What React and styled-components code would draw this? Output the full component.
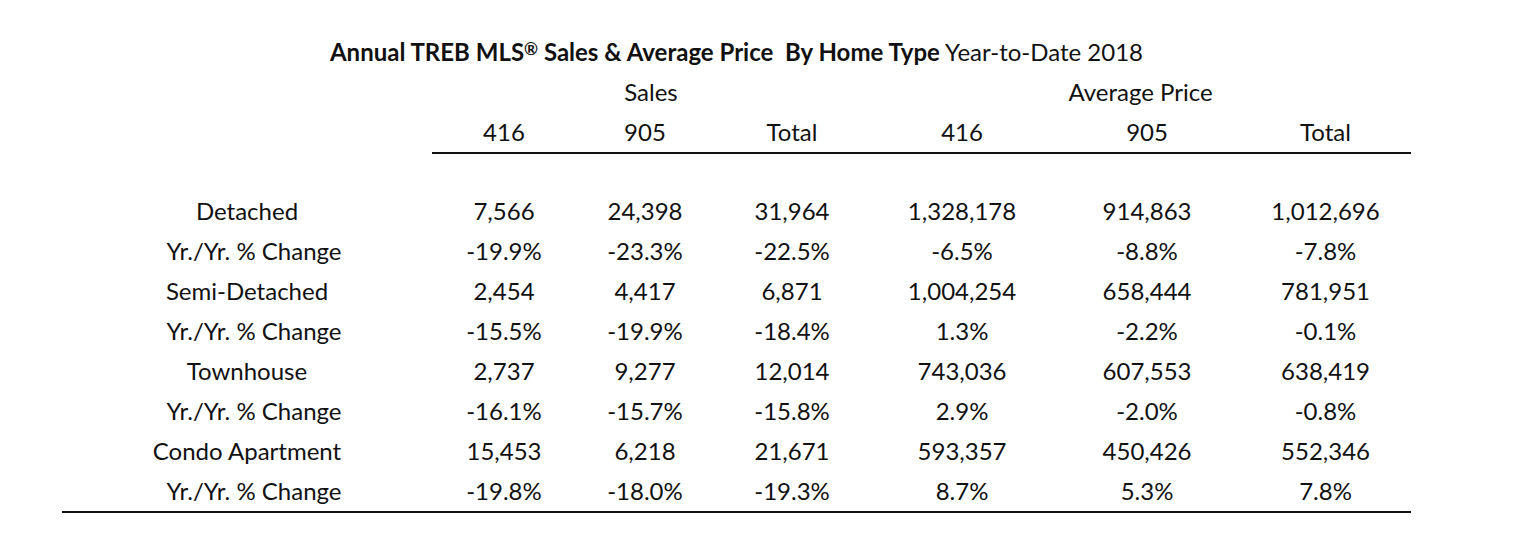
import styled, { createGlobalStyle } from 'styled-components';

const rows = [
  { label: 'Detached', values: ['7,566', '24,398', '31,964', '1,328,178', '914,863', '1,012,696'] },
  { label: 'Yr./Yr. % Change', change: true, values: ['-19.9%', '-23.3%', '-22.5%', '-6.5%', '-8.8%', '-7.8%'] },
  { label: 'Semi-Detached', values: ['2,454', '4,417', '6,871', '1,004,254', '658,444', '781,951'] },
  { label: 'Yr./Yr. % Change', change: true, values: ['-15.5%', '-19.9%', '-18.4%', '1.3%', '-2.2%', '-0.1%'] },
  { label: 'Townhouse', values: ['2,737', '9,277', '12,014', '743,036', '607,553', '638,419'] },
  { label: 'Yr./Yr. % Change', change: true, values: ['-16.1%', '-15.7%', '-15.8%', '2.9%', '-2.0%', '-0.8%'] },
  { label: 'Condo Apartment', values: ['15,453', '6,218', '21,671', '593,357', '450,426', '552,346'] },
  { label: 'Yr./Yr. % Change', change: true, values: ['-19.8%', '-18.0%', '-19.3%', '8.7%', '5.3%', '7.8%'] },
];

const columns = ['416', '905', 'Total', '416', '905', 'Total'];
const widths = [370, 144, 138, 156, 184, 186, 171];

export default function App() {
  return (
    <>
      <GlobalStyle />
      <Page>
        <Title>
          <strong>
            Annual TREB MLS<Reg>®</Reg> Sales &amp; Average Price&nbsp; By Home Type
          </strong>{' '}
          Year-to-Date 2018
        </Title>
        <Table>
          <colgroup>
            {widths.map((w, i) => (
              <col key={i} style={{ width: w }} />
            ))}
          </colgroup>
          <thead>
            <tr>
              <Cell />
              <Cell colSpan={3}>Sales</Cell>
              <Cell colSpan={3}>Average Price</Cell>
            </tr>
            <tr>
              <Cell />
              {columns.map((c, i) => (
                <HeadCell key={i}>{c}</HeadCell>
              ))}
            </tr>
          </thead>
          <tbody>
            <Spacer>
              <td colSpan={7} />
            </Spacer>
            {rows.map((row, i) => (
              <Row key={i} $last={i === rows.length - 1}>
                <Label $change={row.change}>{row.label}</Label>
                {row.values.map((v, j) => (
                  <Cell key={j}>{v}</Cell>
                ))}
              </Row>
            ))}
          </tbody>
        </Table>
      </Page>
    </>
  );
}

const GlobalStyle = createGlobalStyle`
  body {
    margin: 0;
    background: #fff;
    color: #111;
    font-family: Lato, "Open Sans", sans-serif;
  }
`;

const Page = styled.div`
  width: 1349px;
  padding: 32px 0 0 62px;
`;

const Title = styled.div`
  height: 40px;
  line-height: 40px;
  text-align: center;
  font-size: 24px;
  white-space: nowrap;

  strong {
    font-weight: 700;
  }
`;

const Reg = styled.span`
  font-size: 17px;
  vertical-align: 6px;
  line-height: 0;
`;

const Table = styled.table`
  width: 1349px;
  border-collapse: collapse;
  table-layout: fixed;
  font-size: 24px;
`;

const Cell = styled.td`
  height: 40px;
  padding: 0;
  text-align: center;
  white-space: nowrap;
  line-height: 40px;
`;

const HeadCell = styled(Cell)`
  border-bottom: 2px solid #111;
`;

const Label = styled(Cell)`
  padding-left: ${(p) => (p.$change ? '14px' : '0')};
`;

const Spacer = styled.tr`
  height: 38px;
`;

const Row = styled.tr`
  border-bottom: ${(p) => (p.$last ? '2px solid #111' : 'none')};
`;
